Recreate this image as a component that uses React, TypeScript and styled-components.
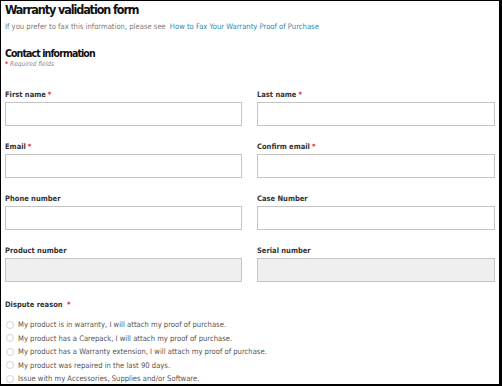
import React from "react";
import styled, { createGlobalStyle } from "styled-components";

const Global = createGlobalStyle`
  html, body { margin: 0; padding: 0; background: #fff; }
  * { box-sizing: border-box; }
`;

const FONT = `"DejaVu Sans Condensed", "Liberation Sans Narrow", Roboto, sans-serif`;

const Frame = styled.div`
  width: 502px;
  height: 386px;
  border-style: solid;
  border-color: #000;
  border-width: 1px 3px 2px 1px;
  padding: 1px 4px 0 4px;
  overflow: hidden;
  font-family: ${FONT};
  background: #fff;
`;

const Title = styled.h1`
  margin: 0;
  font-size: 12.5px;
  line-height: 16px;
  font-weight: 700;
  letter-spacing: -1.1px;
  color: #111;
`;

const Intro = styled.p`
  margin: 3px 0 0;
  font-size: 7.6px;
  line-height: 12px;
  color: #7a7a7a;
`;

const Link = styled.a`
  color: #3489ad;
  text-decoration: none;
  margin-left: 4px;
`;

const SectionTitle = styled.h2`
  margin: 13px 0 0;
  font-size: 10.5px;
  line-height: 14px;
  font-weight: 700;
  letter-spacing: -0.9px;
  color: #111;
`;

const Required = styled.div`
  font-size: 6.5px;
  line-height: 9px;
  font-style: italic;
  color: #888;
`;

const Star = styled.span`
  color: #e0222c;
  font-style: normal;
  font-weight: 700;
  margin-left: 2px;
`;

const Grid = styled.div`
  margin-top: 21px;
  display: grid;
  grid-template-columns: 237px 238px;
  column-gap: 15px;
  row-gap: 16px;
`;

const Field = styled.div`
  display: flex;
  flex-direction: column;
`;

const Label = styled.label`
  font-size: 7.5px;
  line-height: 9px;
  font-weight: 700;
  color: #333;
  margin-bottom: 3px;
`;

const Input = styled.div<{ $disabled?: boolean }>`
  height: 24px;
  border: 1px solid #c4c4c4;
  background: ${(p) => (p.$disabled ? "#efefef" : "#fff")};
`;

const DisputeLabel = styled(Label)`
  display: block;
  margin: 18px 0 9px;
`;

const RadioList = styled.div`
  display: flex;
  flex-direction: column;
`;

const RadioRow = styled.div`
  display: flex;
  align-items: center;
  height: 13.5px;
  font-size: 7.6px;
  color: #555;
`;

const Radio = styled.span`
  width: 8px;
  height: 8px;
  border-radius: 50%;
  border: 1px solid #d4d4d4;
  margin: 0 4px 0 1px;
  flex-shrink: 0;
`;

const fields: { label: string; req?: boolean; disabled?: boolean }[] = [
  { label: "First name", req: true },
  { label: "Last name", req: true },
  { label: "Email", req: true },
  { label: "Confirm email", req: true },
  { label: "Phone number" },
  { label: "Case Number" },
  { label: "Product number", disabled: true },
  { label: "Serial number", disabled: true },
];

const reasons = [
  "My product is in warranty, I will attach my proof of purchase.",
  "My product has a Carepack, I will attach my proof of purchase.",
  "My product has a Warranty extension, I will attach my proof of purchase.",
  "My product was repaired in the last 90 days.",
  "Issue with my Accessories, Supplies and/or Software.",
];

export default function App() {
  return (
    <>
      <Global />
      <Frame>
        <Title>Warranty validation form</Title>
        <Intro>
          If you prefer to fax this information, please see
          <Link>How to Fax Your Warranty Proof of Purchase</Link>
        </Intro>
        <SectionTitle>Contact information</SectionTitle>
        <Required>
          <Star style={{ marginLeft: 0, marginRight: 2 }}>*</Star>Required fields
        </Required>
        <Grid>
          {fields.map((f) => (
            <Field key={f.label}>
              <Label>
                {f.label}
                {f.req && <Star>*</Star>}
              </Label>
              <Input $disabled={f.disabled} />
            </Field>
          ))}
        </Grid>
        <DisputeLabel>
          Dispute reason <Star>*</Star>
        </DisputeLabel>
        <RadioList>
          {reasons.map((r) => (
            <RadioRow key={r}>
              <Radio />
              {r}
            </RadioRow>
          ))}
        </RadioList>
      </Frame>
    </>
  );
}
